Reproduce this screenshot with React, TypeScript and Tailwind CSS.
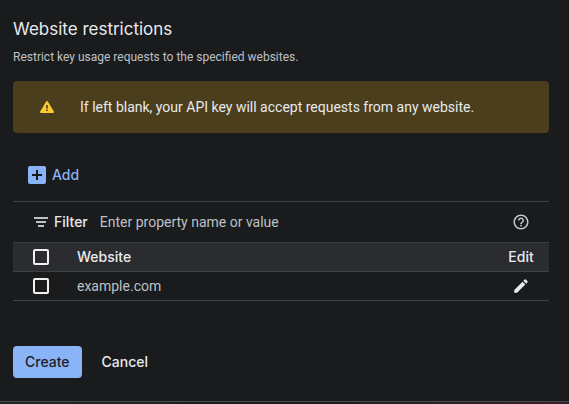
import React, { useState } from 'react';

const websites = ['example.com'];

const checkboxClass =
    'block size-4 appearance-none rounded-xs border-2 border-[#f1f1f1] bg-transparent checked:bg-[#8ab4f8]';

const WarningIcon = () => (
    <svg className="size-4 shrink-0" viewBox="0 0 16 16" aria-hidden="true">
        <path d="M8 3 14 13H2z" fill="#fcc934" stroke="#fcc934" strokeWidth="2" strokeLinejoin="round" />
        <path d="M7.2 6h1.6v3.4H7.2zM7.2 10.4h1.6V12H7.2z" fill="#4b3e1c" />
    </svg>
);

const AddBoxIcon = () => (
    <svg className="size-[18px]" viewBox="0 0 18 18" aria-hidden="true">
        <rect width="18" height="18" rx="2" fill="#8ab4f8" />
        <path d="M8 4h2v4h4v2h-4v4H8v-4H4V8h4z" fill="#1a1b1d" />
    </svg>
);

const FilterIcon = () => (
    <svg className="size-[18px] fill-[#bdc1c6]" viewBox="0 0 18 18" aria-hidden="true">
        <path d="M2 4h14v2H2zM4 8h10v2H4zM6 12h6v2H6z" />
    </svg>
);

const HelpIcon = () => (
    <svg className="size-[18px] fill-[#c4c7cb]" viewBox="0 0 24 24" aria-hidden="true">
        <path d="M11 18h2v-2h-2v2zm1-16C6.48 2 2 6.48 2 12s4.48 10 10 10 10-4.48 10-10S17.52 2 12 2zm0 18c-4.41 0-8-3.59-8-8s3.59-8 8-8 8 3.59 8 8-3.59 8-8 8zm0-14c-2.21 0-4 1.79-4 4h2c0-1.1.9-2 2-2s2 .9 2 2c0 2-3 1.75-3 5h2c0-2.25 3-2.5 3-5 0-2.21-1.79-4-4-4z" />
    </svg>
);

const EditIcon = () => (
    <svg className="size-[18px] fill-[#e8eaed]" viewBox="0 0 24 24" aria-hidden="true">
        <path d="M3 17.25V21h3.75L17.81 9.94l-3.75-3.75L3 17.25zM20.71 7.04c.39-.39.39-1.02 0-1.41l-2.34-2.34c-.39-.39-1.02-.39-1.41 0l-1.83 1.83 3.75 3.75 1.83-1.83z" />
    </svg>
);

const WebsiteTable: React.FC = () => {
    const [selected, setSelected] = useState<string[]>([]);
    const allSelected = selected.length === websites.length;

    const toggle = (site: string) => {
        setSelected(selected.includes(site) ? selected.filter((s) => s !== site) : [...selected, site]);
    };

    return (
        <table className="w-full border-separate border-spacing-0 text-left text-sm">
            <thead>
                <tr className="h-[29px] bg-[#2b2c30] font-['Inter',sans-serif] text-[#e8eaed]">
                    <th className="w-16 border-b border-[#3f4043] py-0 pl-5">
                        <input
                            type="checkbox"
                            aria-label="Select all websites"
                            className={checkboxClass}
                            checked={allSelected}
                            onChange={() => setSelected(allSelected ? [] : websites)}
                        />
                    </th>
                    <th className="border-b border-[#3f4043] p-0 font-medium">Website</th>
                    <th className="w-14 border-b border-[#3f4043] p-0 text-center font-medium">Edit</th>
                </tr>
            </thead>
            <tbody>
                {websites.map((site) => (
                    <tr key={site} className="h-[29px] text-[#bdc1c6]">
                        <td className="border-b border-[#3f4043] py-0 pl-5">
                            <input
                                type="checkbox"
                                aria-label={`Select ${site}`}
                                className={checkboxClass}
                                checked={selected.includes(site)}
                                onChange={() => toggle(site)}
                            />
                        </td>
                        <td className="border-b border-[#3f4043] p-0">{site}</td>
                        <td className="border-b border-[#3f4043] p-0">
                            <button type="button" aria-label={`Edit ${site}`} className="mx-auto block">
                                <EditIcon />
                            </button>
                        </td>
                    </tr>
                ))}
            </tbody>
        </table>
    );
};

export default function App() {
    return (
        <div className="flex min-h-screen flex-col bg-[#1a1b1d] font-['Roboto',sans-serif] text-[#e8eaed]">
            <main className="flex-1 pt-4 pr-5 pl-[13px]">
                <h1 className="font-['Inter',sans-serif] text-[17px] leading-[26px]">Website restrictions</h1>
                <p className="mt-[6px] text-xs leading-[18px] text-[#bdc1c6]">
                    Restrict key usage requests to the specified websites.
                </p>

                <div className="mt-[15px] flex h-[52px] items-center gap-[25px] rounded bg-[#4b3e1c] px-[26px] text-sm">
                    <WarningIcon />
                    <span>If left blank, your API key will accept requests from any website.</span>
                </div>

                <button
                    type="button"
                    className="mt-[26px] flex h-8 items-center gap-[6px] px-[15px] font-['Inter',sans-serif] text-sm font-medium text-[#8ab4f8]"
                >
                    <AddBoxIcon />
                    Add
                </button>

                <div className="mt-[10px] flex h-[42px] items-center border-y border-[#3f4043] px-[19px] text-sm">
                    <label
                        htmlFor="filter"
                        className="flex items-center gap-1 font-['Inter',sans-serif] font-medium"
                    >
                        <FilterIcon />
                        Filter
                    </label>
                    <input
                        id="filter"
                        type="text"
                        placeholder="Enter property name or value"
                        className="ml-3 min-w-0 flex-1 bg-transparent outline-none placeholder:text-[#bdc1c6]"
                    />
                    <button type="button" aria-label="Help">
                        <HelpIcon />
                    </button>
                </div>
                <WebsiteTable />

                <div className="mt-[45px] flex gap-2 font-['Inter',sans-serif] text-sm font-medium">
                    <button type="button" className="h-8 rounded bg-[#8ab4f8] px-3 text-[#202124]">
                        Create
                    </button>
                    <button type="button" className="h-8 px-3">
                        Cancel
                    </button>
                </div>
            </main>
            <div className="h-[3px] border-t border-[#4a4b4d] bg-linear-to-r from-[#17282a] via-[#1b1a20] to-[#33202a]" />
        </div>
    );
}
